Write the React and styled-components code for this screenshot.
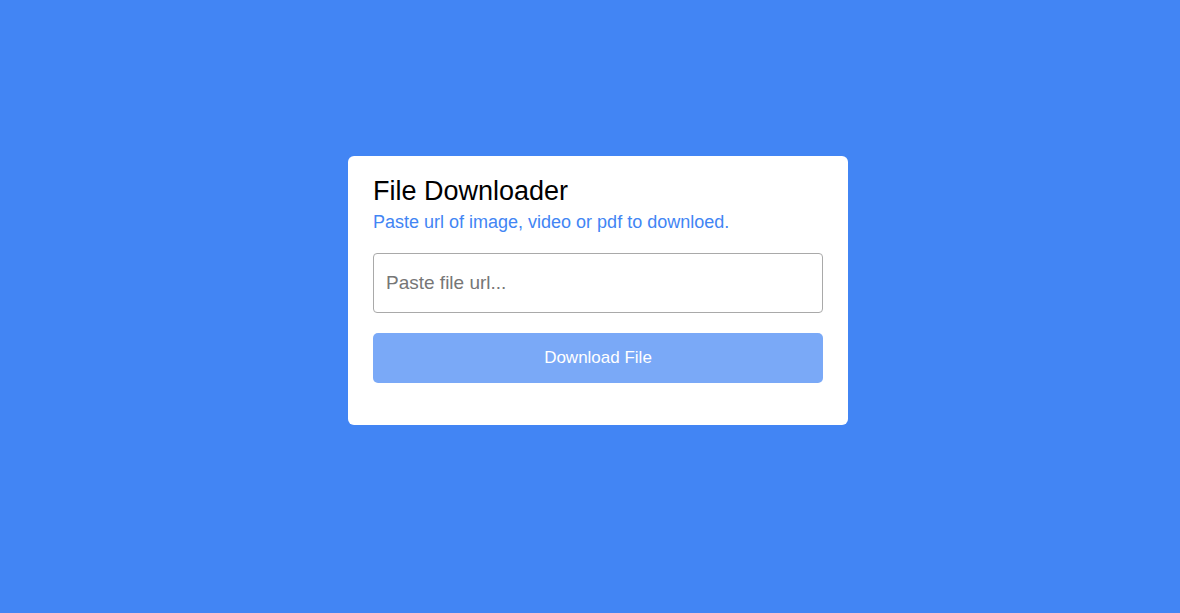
import React, { useState } from 'react';
import styled, { createGlobalStyle } from 'styled-components';

const GlobalStyle = createGlobalStyle`
  * {
    box-sizing: border-box;
  }
  body {
    margin: 0;
    background: #4285f4;
    font-family: "Liberation Sans", Arial, sans-serif;
  }
`;

const Page = styled.div`
  min-height: 100vh;
  display: flex;
  justify-content: center;
  align-items: flex-start;
  padding: 156px 0 0 16px;
  background: #4285f4;
`;

const Card = styled.div`
  width: 500px;
  background: #fff;
  border-radius: 6px;
  padding: 20px 25px 42px;
`;

const Title = styled.h1`
  margin: 0;
  font-size: 27px;
  font-weight: 400;
  line-height: 31px;
  color: #000;
`;

const Subtitle = styled.p`
  margin: 5px 0 0;
  font-size: 18px;
  line-height: 21px;
  color: #4285f4;
`;

const Form = styled.form`
  display: flex;
  flex-direction: column;
  gap: 20px;
  margin-top: 20px;
`;

const UrlInput = styled.input`
  width: 100%;
  height: 60px;
  padding: 0 12px;
  border: 1px solid #a9a9a9;
  border-radius: 4px;
  font-family: inherit;
  font-size: 19px;
  color: #333;
  outline: none;

  &::placeholder {
    color: #767676;
  }
`;

const DownloadButton = styled.button`
  width: 100%;
  height: 50px;
  border: none;
  border-radius: 5px;
  background: #4285f4;
  opacity: ${({ disabled }) => (disabled ? 0.7 : 1)};
  color: #fff;
  font-family: inherit;
  font-size: 17px;
  cursor: pointer;
`;

export default function App() {
  const [url, setUrl] = useState('');

  return (
    <>
      <GlobalStyle />
      <Page>
        <Card>
          <Title>File Downloader</Title>
          <Subtitle>Paste url of image, video or pdf to downloed.</Subtitle>
          <Form onSubmit={e => e.preventDefault()}>
            <UrlInput
              type="url"
              placeholder="Paste file url..."
              value={url}
              onChange={e => setUrl(e.target.value)}
            />
            <DownloadButton type="submit" disabled={!url}>
              Download File
            </DownloadButton>
          </Form>
        </Card>
      </Page>
    </>
  );
}
